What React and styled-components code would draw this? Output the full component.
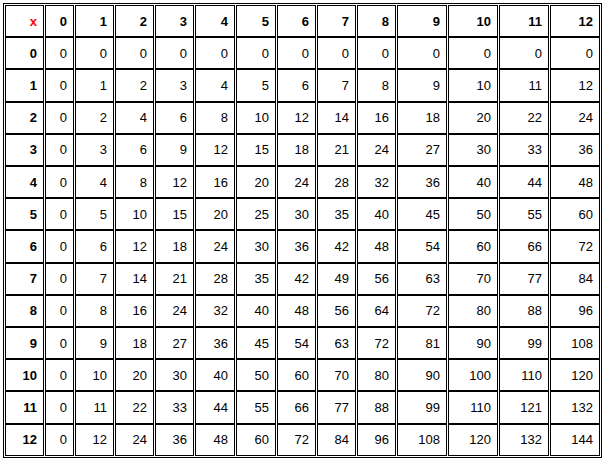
import React from "react";
import styled, { createGlobalStyle } from "styled-components";

const GlobalStyle = createGlobalStyle`
  html, body {
    margin: 0;
    padding: 0;
    background: #fff;
  }
  body {
    padding: 3px;
    font-family: "Liberation Sans", Arial, sans-serif;
  }
`;

const Table = styled.table`
  width: 598px;
  height: 455px;
  border: 1px solid #000;
  border-spacing: 1px 0;
  padding: 1px 0;
  table-layout: fixed;
  font-size: 13px;
  color: #000;
`;

const Cell = styled.td`
  border: 1px solid #000;
  padding: 0 6px 0 0;
  text-align: right;
  vertical-align: middle;
  font-weight: ${({ $head }) => ($head ? "bold" : "normal")};
  color: ${({ $red }) => ($red ? "#ff0000" : "#000")};
`;

const nums = Array.from({ length: 13 }, (_, i) => i);

// column widths, wider where the numbers get three digits
const widths = [39, 29, 39, 39, 39, 40, 40, 39, 39, 39, 50, 50, 50, 50];

const App = () => (
  <>
    <GlobalStyle />
    <Table>
      <colgroup>
        {widths.map((w, i) => (
          <col key={i} style={{ width: w }} />
        ))}
      </colgroup>
      <tbody>
        <tr>
          <Cell as="th" $head $red>
            x
          </Cell>
          {nums.map((n) => (
            <Cell as="th" $head key={n}>
              {n}
            </Cell>
          ))}
        </tr>
        {nums.map((row) => (
          <tr key={row}>
            <Cell as="th" $head>
              {row}
            </Cell>
            {nums.map((col) => (
              <Cell key={col}>{row * col}</Cell>
            ))}
          </tr>
        ))}
      </tbody>
    </Table>
  </>
);

export default App;
